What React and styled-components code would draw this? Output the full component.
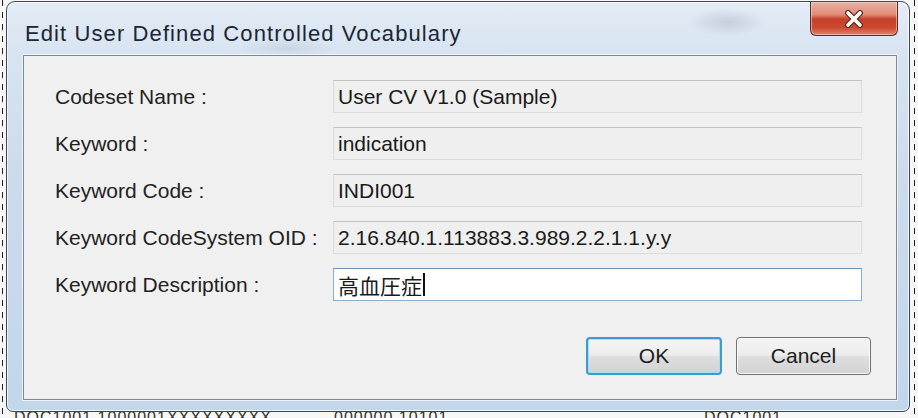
import React from 'react'
import styled, { createGlobalStyle } from 'styled-components'

const GlobalStyle = createGlobalStyle`
    html, body {
        margin: 0;
        padding: 0;
        background: #ffffff;
    }
    body {
        font-family: "Liberation Sans", Arial, sans-serif;
    }
`

const Desktop = styled.div`
    position: relative;
    width: 918px;
    height: 418px;
    overflow: hidden;
    box-sizing: border-box;
    padding: 1px 8px 0 6px;
    background:
        repeating-linear-gradient(180deg, #222 0 6px, transparent 6px 12px) 2px 0 / 1px 100% no-repeat,
        repeating-linear-gradient(180deg, #222 0 6px, transparent 6px 12px) 914px 0 / 1px 100% no-repeat,
        #f7f7f7;
`

// strip of the sheet behind the dialog, only its top edge shows
const BackdropRow = styled.div`
    position: absolute;
    left: 14px;
    right: 0;
    bottom: -8px;
    display: flex;
    font-size: 16px;
    line-height: 16px;
    color: #333;
    letter-spacing: 1px;
`

const BackdropCell = styled.span`
    width: ${p => p.$w}px;
`

const Window = styled.div`
    position: relative;
    width: 904px;
    height: 411px;
    box-sizing: border-box;
    border: 1px solid #3d4754;
    border-radius: 9px 9px 7px 7px;
    display: flex;
    flex-direction: column;
    background: linear-gradient(180deg, #e4ecf6 0%, #d8e4f1 12%, #cddbeb 40%, #c2d6ec 100%);
    box-shadow: inset 0 0 0 1px rgba(255, 255, 255, 0.75);
`

const TitleBar = styled.div`
    height: 53px;
    display: flex;
    align-items: flex-start;
    justify-content: space-between;
    padding: 0 11px 0 18px;
    background:
        radial-gradient(ellipse 40px 14px at 720px 20px, rgba(120, 130, 145, 0.25), transparent),
        radial-gradient(ellipse 50px 10px at 280px 46px, rgba(140, 150, 165, 0.18), transparent);
`

const Title = styled.div`
    margin-top: 19px;
    font-size: 22px;
    letter-spacing: 1.1px;
    color: #1b2533;
`

const CloseButton = styled.div`
    width: 88px;
    height: 34px;
    box-sizing: border-box;
    border: 1px solid #5b2b22;
    border-top: none;
    border-radius: 0 0 6px 6px;
    display: flex;
    align-items: center;
    justify-content: center;
    background: linear-gradient(180deg, #eab2a4 0%, #e08b77 38%, #c6402a 52%, #cc4a31 78%, #e0846b 100%);
    box-shadow: inset 0 0 0 1px rgba(255, 220, 210, 0.55);
`

const Client = styled.div`
    flex: 1;
    margin: 0 12px 11px 16px;
    border: 1px solid #77889a;
    background: #f0f0f0;
    box-shadow: 0 0 0 1px rgba(255, 255, 255, 0.7);
    display: flex;
    flex-direction: column;
    padding: 24px 25px 0 31px;
`

const Form = styled.div`
    display: grid;
    grid-template-columns: 278px 529px;
    grid-auto-rows: 33px;
    row-gap: 14px;
    align-items: center;
`

const Label = styled.div`
    font-size: 21px;
    color: #222;
    white-space: nowrap;
`

const Field = styled.div`
    height: 33px;
    box-sizing: border-box;
    display: flex;
    align-items: center;
    padding-left: 4px;
    font-size: 21px;
    color: #1a1a1a;
    white-space: nowrap;
    background: ${p => (p.$editable ? '#ffffff' : '#efefef')};
    border: 1px solid ${p => (p.$editable ? '#8eabc8' : '#dcdcdc')};
    border-top-color: ${p => (p.$editable ? '#6f93b8' : '#c2c2c2')};
    font-family: ${p => (p.$editable ? '"Noto Sans CJK JP", "Liberation Sans", sans-serif' : '"Liberation Sans", Arial, sans-serif')};
`

const Caret = styled.span`
    display: inline-block;
    width: 0;
    height: 23px;
    border-left: 2px solid #111;
    margin-left: 1px;
`

const ButtonRow = styled.div`
    display: flex;
    justify-content: flex-end;
    gap: 14px;
    margin-top: 36px;
`

const Button = styled.div`
    width: ${p => p.$w}px;
    height: 38px;
    box-sizing: border-box;
    border-radius: 4px;
    display: flex;
    align-items: center;
    justify-content: center;
    font-size: 21px;
    color: #1c1c1c;
    background: linear-gradient(180deg, #f4f4f4 0%, #ececec 48%, #dedede 52%, #d2d2d2 100%);
    border: ${p => (p.$default ? '2px solid #3c9ccf' : '1px solid #717171')};
    box-shadow: ${p => (p.$default ? 'inset 0 0 0 1px #a9def5' : 'inset 0 0 0 1px #fafafa')};
`

const fields = [
    { label: 'Codeset Name :', value: 'User CV V1.0 (Sample)' },
    { label: 'Keyword :', value: 'indication' },
    { label: 'Keyword Code :', value: 'INDI001' },
    { label: 'Keyword CodeSystem OID :', value: '2.16.840.1.113883.3.989.2.2.1.1.y.y' },
]

export default function App () {
    return (
        <>
            <GlobalStyle />
            <Desktop>
                <BackdropRow>
                    <BackdropCell $w={320}>DOC1001 1000001XXXXXXXXX</BackdropCell>
                    <BackdropCell $w={370}>000000 10101</BackdropCell>
                    <BackdropCell $w={120}>DOC1001</BackdropCell>
                </BackdropRow>
                <Window>
                    <TitleBar>
                        <Title>Edit User Defined Controlled Vocabulary</Title>
                        <CloseButton>
                            <svg width="22" height="18" viewBox="0 0 22 18">
                                <path d="M5 3 L17 15 M17 3 L5 15" stroke="#5a2a24" strokeWidth="6" strokeLinecap="round" />
                                <path d="M5 3 L17 15 M17 3 L5 15" stroke="#ffffff" strokeWidth="3.6" strokeLinecap="round" />
                            </svg>
                        </CloseButton>
                    </TitleBar>
                    <Client>
                        <Form>
                            {fields.map((f) => (
                                <React.Fragment key={f.label}>
                                    <Label>{f.label}</Label>
                                    <Field>{f.value}</Field>
                                </React.Fragment>
                            ))}
                            <Label>Keyword Description :</Label>
                            <Field $editable>高血圧症<Caret /></Field>
                        </Form>
                        <ButtonRow>
                            <Button $w={136} $default>OK</Button>
                            <Button $w={135}>Cancel</Button>
                        </ButtonRow>
                    </Client>
                </Window>
            </Desktop>
        </>
    )
}
